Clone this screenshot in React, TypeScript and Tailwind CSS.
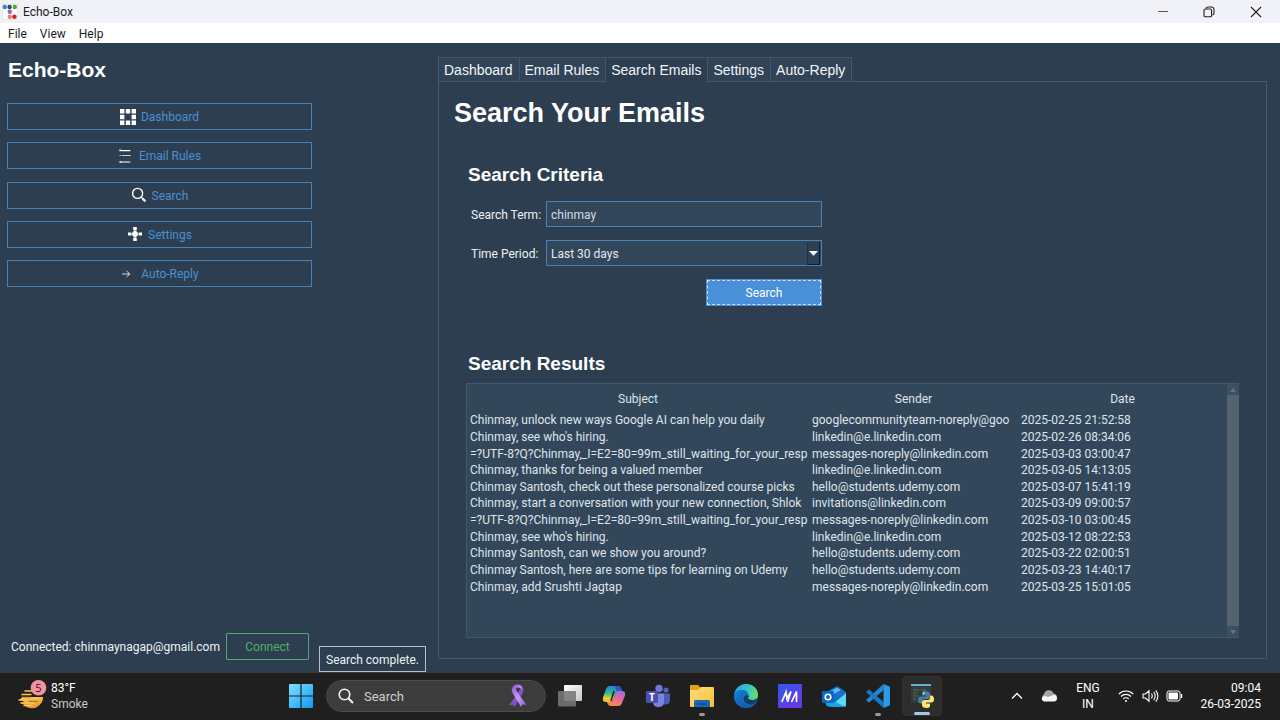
import { useState, type ReactNode } from "react";

const uiFont = "font-['Roboto','Noto_Sans',sans-serif]";
const headFont = "font-['Liberation_Sans',Arial,sans-serif]";

const results = [
  ["Chinmay, unlock new ways Google AI can help you daily", "googlecommunityteam-noreply@goo", "2025-02-25 21:52:58"],
  ["Chinmay, see who's hiring.", "linkedin@e.linkedin.com", "2025-02-26 08:34:06"],
  ["=?UTF-8?Q?Chinmay,_I=E2=80=99m_still_waiting_for_your_resp", "messages-noreply@linkedin.com", "2025-03-03 03:00:47"],
  ["Chinmay, thanks for being a valued member", "linkedin@e.linkedin.com", "2025-03-05 14:13:05"],
  ["Chinmay Santosh, check out these personalized course picks", "hello@students.udemy.com", "2025-03-07 15:41:19"],
  ["Chinmay, start a conversation with your new connection, Shlok", "invitations@linkedin.com", "2025-03-09 09:00:57"],
  ["=?UTF-8?Q?Chinmay,_I=E2=80=99m_still_waiting_for_your_resp", "messages-noreply@linkedin.com", "2025-03-10 03:00:45"],
  ["Chinmay, see who's hiring.", "linkedin@e.linkedin.com", "2025-03-12 08:22:53"],
  ["Chinmay Santosh, can we show you around?", "hello@students.udemy.com", "2025-03-22 02:00:51"],
  ["Chinmay Santosh, here are some tips for learning on Udemy", "hello@students.udemy.com", "2025-03-23 14:40:17"],
  ["Chinmay, add Srushti Jagtap", "messages-noreply@linkedin.com", "2025-03-25 15:01:05"],
];

function LogoIcon() {
  return (
    <svg width="16" height="16" viewBox="0 0 16 16" aria-hidden="true">
      <rect x="0.3" y="0.3" width="15.4" height="15.4" fill="#fff" stroke="#c9dfe2" strokeWidth="0.6" />
      <circle cx="2.8" cy="3" r="2.2" fill="#3f7fd0" />
      <circle cx="7.6" cy="3" r="2.2" fill="#3a3f66" />
      <circle cx="12.8" cy="3" r="2.2" fill="#4fa52f" />
      <circle cx="7.8" cy="7.8" r="2.2" fill="#8c6bb5" />
      <circle cx="7.8" cy="12.8" r="2.2" fill="#f08060" />
      <circle cx="12.4" cy="12.8" r="2.3" fill="#d81f3f" />
    </svg>
  );
}

function GridIcon() {
  return (
    <svg width="16" height="16" viewBox="0 0 16 16" fill="#fff" aria-hidden="true">
      <path d="M0 0h4.4v4.4H0zM5.8 0h4.4v4.4H5.8zM11.6 0H16v4.4h-4.4zM0 5.8h4.4v4.4H0zM11.6 5.8H16v4.4h-4.4zM0 11.6h4.4V16H0zM5.8 11.6h4.4V16H5.8zM11.6 11.6H16V16h-4.4z" />
    </svg>
  );
}

function ListIcon() {
  return (
    <svg width="16" height="16" viewBox="0 0 16 16" fill="#fff" aria-hidden="true">
      <path d="M2.4 2h10v1.2h-10zM1.4 1.6h1.8v1.6H1.4zM3.8 7.2h9v.7h-9zM1.6 7h1.1v1.1H1.6zM3 13.4h9.4v1H3zM1.4 13.2h2.2v1.6H1.4z" />
    </svg>
  );
}

function SearchIcon() {
  return (
    <svg width="16" height="16" viewBox="0 0 16 16" fill="none" stroke="#fff" aria-hidden="true">
      <circle cx="6.6" cy="6.4" r="5" strokeWidth="1.4" />
      <path d="M10.2 10.2 12 12" strokeWidth="1.4" />
      <path d="m11.5 11.5 2.9 2.9" strokeWidth="2.2" />
    </svg>
  );
}

function SettingsIcon() {
  return (
    <svg width="16" height="16" viewBox="0 0 16 16" fill="#fff" aria-hidden="true">
      <circle cx="8" cy="8" r="2.9" />
      <path d="M6.2 1h3.6v3.2H6.2zM6.2 11.8h3.6V15H6.2zM1 6.6h3.2v2.8H1zM11.8 6.6H15v2.8h-3.2zM4 7.5h8v1H4zM7.5 4h1v8h-1z" />
    </svg>
  );
}

function ArrowIcon() {
  return (
    <svg width="16" height="16" viewBox="0 0 16 16" fill="none" stroke="#e8edf2" strokeWidth="0.9" aria-hidden="true">
      <path d="M2 8h8M6.6 5 9.8 8l-3.2 3" />
    </svg>
  );
}

const navItems: { label: string; icon: ReactNode }[] = [
  { label: "Dashboard", icon: <GridIcon /> },
  { label: "Email Rules", icon: <ListIcon /> },
  { label: "Search", icon: <SearchIcon /> },
  { label: "Settings", icon: <SettingsIcon /> },
  { label: "Auto-Reply", icon: <ArrowIcon /> },
];

const tabs = ["Dashboard", "Email Rules", "Search Emails", "Settings", "Auto-Reply"];

function TitleBar() {
  return (
    <header className="flex h-[23px] items-center bg-[#f0f2f7] pl-[2px]">
      <LogoIcon />
      <span className="ml-[5px] text-[12px] leading-4 text-[#1b1b1b]">Echo-Box</span>
      <div className="ml-auto flex h-full">
        <button aria-label="Minimize" className="flex w-[47px] items-center justify-center">
          <svg width="12" height="12" viewBox="0 0 12 12" stroke="#555" fill="none"><path d="M1 5.5h10" /></svg>
        </button>
        <button aria-label="Restore" className="flex w-[46px] items-center justify-center">
          <svg width="12" height="12" viewBox="0 0 12 12" stroke="#222" fill="none">
            <rect x="1" y="3" width="7.6" height="7.8" rx="1.3" strokeWidth="1.1" />
            <path d="M3 2.6Q3.200 1 5 1h3.200Q11 1 11 3.800v3.400q0 1.400-1.600 1.800" strokeWidth="1.1" />
          </svg>
        </button>
        <button aria-label="Close" className="flex w-[48px] items-center justify-center">
          <svg width="12" height="12" viewBox="0 0 12 12" stroke="#222" fill="none" strokeWidth="1.1"><path d="m1 1 10 10M11 1 1 11" /></svg>
        </button>
      </div>
    </header>
  );
}

function Sidebar() {
  return (
    <aside className="flex w-[319px] shrink-0 flex-col pb-3 pl-[7px]">
      <h1 className={`mt-[14px] pl-px text-[21px] leading-[26px] font-bold text-white ${headFont}`}>Echo-Box</h1>
      <nav className="mt-5 mr-[7px] flex h-[184px] flex-col justify-between">
        {navItems.map((item) => (
          <button key={item.label} className="flex h-[27px] items-center justify-center gap-[5px] border border-[#4582b8] text-[12px] leading-4 text-[#4a90d2]">
            {item.icon}
            <span className="pt-px">{item.label}</span>
          </button>
        ))}
      </nav>
      <div className="mt-auto mr-[10px] flex items-center justify-between pl-1">
        <span className="text-[12px] leading-4 whitespace-nowrap text-[#eef2f5]">Connected: chinmaynagap@gmail.com</span>
        <button className="h-[27px] w-[83px] rounded-[1px] border border-[#55a973] text-[12px] leading-4 text-[#4fae68]">Connect</button>
      </div>
    </aside>
  );
}

function SearchForm() {
  const [term, setTerm] = useState("chinmay");
  return (
    <form className="ml-4 flex w-[351px] flex-col gap-[13px] text-[12px] leading-4 text-[#eef2f5]" onSubmit={(e) => e.preventDefault()}>
      <div className="flex items-center">
        <label htmlFor="term" className="w-[75px] pt-px whitespace-nowrap">Search Term:</label>
        <input id="term" value={term} onChange={(e) => setTerm(e.target.value)} className="h-[26px] min-w-0 flex-1 border border-[#4a82b8] bg-[#33475b] px-[4px] pt-px text-[#d5dce2] outline-none" />
      </div>
      <div className="flex items-center">
        <label htmlFor="period" className="w-[75px] pt-px whitespace-nowrap">Time Period:</label>
        <div className="relative flex min-w-0 flex-1">
          <select id="period" defaultValue="30" className="h-[26px] w-full appearance-none border border-[#4a82b8] bg-[#33475b] px-[4px] pt-px text-[#e3e8ec] outline-none">
            <option value="7">Last 7 days</option>
            <option value="30">Last 30 days</option>
            <option value="90">Last 90 days</option>
          </select>
          <span className="pointer-events-none absolute top-[2px] right-[2px] bottom-[1px] flex w-[13px] items-center justify-center border border-t-[#2c3e50] border-r-[#131c2b] border-b-[#131c2b] border-l-[#22303e] bg-[#2e4053]">
            <svg className="shrink-0" width="9" height="5" viewBox="0 0 9 5" fill="#fff" aria-hidden="true"><path d="M0 0h9L4.500 4.800z" /></svg>
          </span>
        </div>
      </div>
      <button className="flex h-[27px] w-[116px] self-end bg-[#4a90d9] p-px text-white">
        <span className="flex h-full w-full items-center justify-center border border-dashed border-[#c9e1f7]">Search</span>
      </button>
    </form>
  );
}

function ResultsTable() {
  return (
    <div className="mr-[27px] mb-5 ml-[27px] flex flex-1 border border-r-0 border-[#44586a] bg-[#33475b]">
      <div className="min-w-0 flex-1">
        <table className="w-full table-fixed border-collapse text-[12px] leading-4 text-[#dfe5ea]">
          <colgroup>
            <col className="w-[45%]" />
            <col />
            <col />
          </colgroup>
          <thead>
            <tr className="h-7">
              <th className="p-0 pt-px font-normal">Subject</th>
              <th className="p-0 pt-px font-normal">Sender</th>
              <th className="p-0 pt-px font-normal">Date</th>
            </tr>
          </thead>
          <tbody className="h-[183px]">
            {results.map((row, i) => (
              <tr key={i}>
                {row.map((cell, j) => (
                  <td key={j} className="overflow-hidden p-0 pl-[3px] whitespace-nowrap">{cell}</td>
                ))}
              </tr>
            ))}
          </tbody>
        </table>
      </div>
      <div className="flex w-3 flex-col items-center justify-between bg-[#54636f]" aria-hidden="true">
        <span className="flex h-[11px] w-full items-center justify-center bg-[#3e5060]">
          <svg width="6" height="4" viewBox="0 0 6 4" fill="#657482"><path d="M0 4h6L3 0z" /></svg>
        </span>
        <span className="flex h-[11px] w-full items-center justify-center bg-[#3e5060]">
          <svg width="6" height="4" viewBox="0 0 6 4" fill="#657482"><path d="M0 0h6L3 4z" /></svg>
        </span>
      </div>
    </div>
  );
}

function Workspace() {
  const [active, setActive] = useState("Search Emails");
  return (
    <main className="mt-[14px] mr-[13px] mb-[13px] flex min-w-0 flex-1 flex-col">
      <div role="tablist" className="flex border-l border-[#465b6d]">
        {tabs.map((tab) => (
          <button
            key={tab}
            role="tab"
            aria-selected={active === tab}
            onClick={() => setActive(tab)}
            className={`h-[25px] border-t border-r border-[#43576a] pr-[6px] pl-[5px] text-[14px] leading-4 text-[#f4f7f9] ${headFont} ${active === tab ? "bg-[#2c3e50]" : "border-b bg-[#304357]"}`}
          >
            {tab}
          </button>
        ))}
        <span className="flex-1 border-b border-[#465b6d]" />
      </div>
      <section className="flex flex-1 flex-col rounded-b-[2px] border border-t-0 border-[#465b6d]">
        <h2 className={`mt-[14px] ml-[15px] text-[27px] leading-[34px] font-bold text-white ${headFont}`}>Search Your Emails</h2>
        <h3 className={`mt-[33px] ml-[29px] text-[19px] leading-6 font-bold text-white ${headFont}`}>Search Criteria</h3>
        <div className="mt-[14px] ml-4">
          <SearchForm />
        </div>
        <h3 className={`mt-[46px] mb-[7px] ml-[29px] text-[19px] leading-6 font-bold text-white ${headFont}`}>Search Results</h3>
        <ResultsTable />
      </section>
    </main>
  );
}

function WeatherIcon() {
  return (
    <svg width="30" height="32" viewBox="0 0 30 32" aria-hidden="true">
      <defs><linearGradient id="sun" x1="0" y1="0" x2="0" y2="1"><stop offset="0" stopColor="#f6c34a" /><stop offset="1" stopColor="#ee8f2c" /></linearGradient></defs>
      <path d="M4 17h21a10.500 10.500 0 0 1-4 8.500A10 10 0 0 1 6.500 25L2 22.500h5L2 19.500z" fill="url(#sun)" />
      <path d="M7 11h7M4 14.500h9M9 18h11M1 20h8M3 23h13M6 25.500h8" stroke="#f5c65a" strokeWidth="1.500" strokeLinecap="round" />
      <path d="M4 17h9M11 21.500h9" stroke="#9b5c22" strokeWidth="0.800" />
      <circle cx="20.500" cy="7.800" r="7.800" fill="#f591a0" />
      <text x="20.500" y="11.800" textAnchor="middle" fontSize="11" fill="#30161a" fontFamily="Open Sans, sans-serif">5</text>
    </svg>
  );
}

function StartIcon() {
  return (
    <svg width="24" height="24" viewBox="0 0 24 24" aria-hidden="true">
      <defs><linearGradient id="start" x1="0" y1="0" x2="1" y2="1"><stop offset="0" stopColor="#7be3ff" /><stop offset="1" stopColor="#1295f3" /></linearGradient></defs>
      <path d="M1 0h10.400v11.400H0V1q0-1 1-1zM12.600 0H23q1 0 1 1v10.400H12.600zM0 12.600h11.400V24H1q-1 0-1-1zM12.600 12.600H24V23q0 1-1 1H12.600z" fill="url(#start)" />
    </svg>
  );
}

function RibbonIcon() {
  return (
    <svg width="20" height="24" viewBox="0 0 20 24" aria-hidden="true">
      <defs><linearGradient id="rib" x1="0" y1="0" x2="1" y2="1"><stop offset="0" stopColor="#8c53dc" /><stop offset="0.500" stopColor="#c59cf5" /><stop offset="1" stopColor="#8a58cf" /></linearGradient></defs>
      <path d="M13 1.500Q17 5.500 14.200 10L6.500 23l-2-2.500L1 21.500 10.200 8Q13.500 4.500 13 1.500z" fill="#8550cf" />
      <path d="M5 2.500Q2.500 6 4.800 9.500L13 23l1.800-2.800 3.700.8L8.800 7.500Q7 4 9.500 3.500q3 0 4.500 2Q15 .5 9.500.5 6.500.5 5 2.500z" fill="url(#rib)" />
    </svg>
  );
}

function TaskViewIcon() {
  return (
    <svg width="26" height="24" viewBox="0 0 26 24" aria-hidden="true">
      <defs><linearGradient id="tv" x1="0" y1="0" x2="1" y2="1"><stop offset="0" stopColor="#fff" /><stop offset="1" stopColor="#c8c8c8" /></linearGradient></defs>
      <rect x="7" y="1" width="18" height="16" rx="1" fill="url(#tv)" />
      <rect x="1" y="7" width="18" height="15.500" rx="1" fill="#777" fillOpacity="0.880" />
    </svg>
  );
}

function CopilotIcon() {
  return (
    <svg width="24" height="24" viewBox="0 0 24 24" aria-hidden="true">
      <defs>
        <linearGradient id="cpa" x1="0.300" y1="0" x2="0.200" y2="1"><stop offset="0" stopColor="#168bd8" /><stop offset="0.450" stopColor="#38b890" /><stop offset="0.750" stopColor="#d5d637" /><stop offset="1" stopColor="#f5b830" /></linearGradient>
        <linearGradient id="cpb" x1="0.700" y1="0" x2="0.400" y2="1"><stop offset="0" stopColor="#a16be0" /><stop offset="0.500" stopColor="#e9679e" /><stop offset="1" stopColor="#f58a4a" /></linearGradient>
      </defs>
      <path d="M8 2h8q2.500 0 3.400 3l.6 2h-4q-2 0-2.800 3l-1.700 5.500Q10.500 18 8 18H4Q0 18 1 13.500L4 5Q5 2 8 2z" fill="url(#cpa)" />
      <path d="M13 2h3q2.500 0 3.400 3l.6 2h-4q-2 0-2.500-2z" fill="#2857c8" />
      <path d="M16 7h4q4 0 3 4.500L20 19q-1 3-4 3H9q-3 0-4-4h3q2.500 0 3.500-2.500L13.500 9Q14 7 16 7z" fill="url(#cpb)" />
      <path d="m12 7-3 10" stroke="#242027" strokeWidth="1.600" />
    </svg>
  );
}

function TeamsIcon() {
  return (
    <svg width="26" height="24" viewBox="0 0 26 24" aria-hidden="true">
      <circle cx="14" cy="4.500" r="3.700" fill="#6d78d8" />
      <circle cx="21" cy="6" r="2.600" fill="#565fba" />
      <path d="M16 9.500h8q1 0 1 1V16q0 4-4 4.500h-5z" fill="#5059b3" />
      <path d="M8 9.500h11v8q0 5.500-5.500 5.500T8 17.500z" fill="#7b83e0" />
      <rect x="1" y="7" width="12" height="12" rx="1.300" fill="#4851ae" />
      <text x="7" y="16.500" textAnchor="middle" fontSize="10" fontWeight="700" fill="#fff" fontFamily="Open Sans, sans-serif">T</text>
    </svg>
  );
}

function FolderIcon() {
  return (
    <svg width="26" height="24" viewBox="0 0 26 24" aria-hidden="true">
      <defs><linearGradient id="fold" x1="0" y1="0" x2="1" y2="1"><stop offset="0" stopColor="#ffe080" /><stop offset="1" stopColor="#f8be30" /></linearGradient></defs>
      <path d="M2 1h7l3 3h12v6H1V2q0-1 1-1z" fill="#e6a020" />
      <path d="M2 6h7l3-3h12q1 0 1 1v18q0 1-1 1H2q-1 0-1-1V7q0-1 1-1z" fill="url(#fold)" />
      <path d="M5 23v-5.500Q5 16 6.500 16h13q1.500 0 1.500 1.500V23z" fill="#1769b5" />
      <path d="M8.500 20h9" stroke="#0b4682" strokeWidth="1.300" />
    </svg>
  );
}

function EdgeIcon() {
  return (
    <svg width="24" height="24" viewBox="0 0 24 24" aria-hidden="true">
      <defs>
        <linearGradient id="eda" x1="0" y1="0.300" x2="1" y2="0.500"><stop offset="0" stopColor="#25a6e3" /><stop offset="0.600" stopColor="#38c8b9" /><stop offset="1" stopColor="#70da5d" /></linearGradient>
        <linearGradient id="edb" x1="0" y1="0" x2="1" y2="1"><stop offset="0" stopColor="#1681d7" /><stop offset="1" stopColor="#0d519f" /></linearGradient>
      </defs>
      <circle cx="12" cy="12" r="12" fill="#1674c8" />
      <path d="M.4 10C1.500 4 6.500 0 12 0c7 0 12 5 12 10.500 0 3.500-2.500 5.500-6 5.500-2.500 0-4-1-4-1.900 0-.6.800-1 .8-2.500C14.800 8.500 11.500 6 8 6 4.500 6 1.500 8 .4 10z" fill="url(#eda)" />
      <path d="M0 12C1 7 4.500 6 8 6c2.500 0 4.700 1.200 6 3-3-.8-6 1.500-6 5 0 4 4 8.500 10 7.800C12 26 0 23 0 12z" fill="url(#edb)" />
      <path d="M14.800 12c0 1-.8 1.500-.8 2.100 0 .9 1.500 1.900 4 1.900 1.800 0 3.500-.6 4.500-1.600l.4 1.600c-1.500 3.500-4 4.700-6 4.700-4.500 0-7.400-3.200-7.400-6 0-2 1.500-3.500 3-3.700z" fill="#123f69" />
    </svg>
  );
}

function ArmouryIcon() {
  return (
    <svg width="24" height="24" viewBox="0 0 24 24" aria-hidden="true">
      <defs><linearGradient id="my" x1="0" y1="0" x2="0.800" y2="1"><stop offset="0" stopColor="#3158ec" /><stop offset="1" stopColor="#6938e4" /></linearGradient></defs>
      <rect width="24" height="24" fill="url(#my)" />
      <path d="M3.800 18 8 8l.8 6.500L13 7.500 9.500 18M13.500 18l5-10.500V18" stroke="#fff" strokeWidth="1.700" fill="none" />
    </svg>
  );
}

function OutlookIcon() {
  return (
    <svg width="26" height="24" viewBox="0 0 26 24" aria-hidden="true">
      <path d="M5 8 15 2.500Q16 2 17 2.500L25 8v13q0 1.500-1.500 1.500H8q-3 0-3-3z" fill="#1566bd" />
      <path d="m8 8 8-4.500 4 2.500-10 6z" fill="#59b8f0" />
      <path d="m13 11 7-5L25 9l-11 7z" fill="#1a72c8" />
      <path d="M25 9v12q0 1.500-1.500 1.500H9z" fill="#55dafa" />
      <path d="M5 13.500 23.500 22.500H8q-3 0-3-3z" fill="#1ba2e6" />
      <rect x="1" y="7" width="12" height="12" rx="1.300" fill="#0d68c1" />
      <circle cx="7" cy="13" r="2.800" stroke="#fff" strokeWidth="1.600" fill="none" />
    </svg>
  );
}

function CodeIcon() {
  return (
    <svg width="24" height="24" viewBox="0 0 24 24" aria-hidden="true">
      <path d="M17.500 0v6.200L3 18.500 0 16z" fill="#2488cf" />
      <path d="M17.500 24v-6.200L3 5.500 0 8z" fill="#1678c4" />
      <path d="M17.500 0 24 2.700v18.600L17.500 24z" fill="#2b9ae8" />
    </svg>
  );
}

function PythonWindowIcon() {
  return (
    <svg width="26" height="26" viewBox="0 0 26 26" aria-hidden="true">
      <path d="M2 1h20v19H2z" fill="#333b3c" />
      <path d="M2 1h20v2H2z" fill="#6aaad7" />
      <path d="M4 7h6M4 10h4M4 13h5M4 16h3M12 7h5" stroke="#4f7848" />
      <path d="M16.500 8c-3.500 0-3.500 1.500-3.500 3v1.500h4v1h-5.500C9.500 13.500 9 15 9 17s1 3.500 2.500 3.500H13V18q0-2 2-2h4q2 0 2-2v-3c0-2-1.500-3-4.500-3z" fill="#477ba3" />
      <path d="M17.500 25c3.500 0 3.500-1.500 3.500-3v-1.500h-4v-1h5.500c2 0 2.500-1.500 2.500-3.500s-1-3.500-2.500-3.500H21V15q0 2-2 2h-4q-2 0-2 2v3c0 2 1.500 3 4.500 3z" fill="#ffe26a" />
      <circle cx="14.800" cy="10.300" r="0.900" fill="#fff" />
      <circle cx="19.200" cy="22.700" r="0.800" fill="#fff" />
    </svg>
  );
}

const apps: { name: string; icon: ReactNode; state?: "open" | "active" }[] = [
  { name: "Task View", icon: <TaskViewIcon /> },
  { name: "Copilot", icon: <CopilotIcon /> },
  { name: "Teams", icon: <TeamsIcon /> },
  { name: "File Explorer", icon: <FolderIcon />, state: "open" },
  { name: "Edge", icon: <EdgeIcon /> },
  { name: "MyASUS", icon: <ArmouryIcon /> },
  { name: "Outlook", icon: <OutlookIcon /> },
  { name: "Visual Studio Code", icon: <CodeIcon />, state: "open" },
  { name: "Python", icon: <PythonWindowIcon />, state: "active" },
];

function Taskbar() {
  return (
    <footer className="flex h-12 items-center border-t border-[#3b3a3b] bg-[#201f20] pb-px text-[12px] leading-4 text-white">
      <button className="flex w-[281px] items-center gap-[3px] pl-[18px] text-left">
        <WeatherIcon />
        <span className="flex flex-col">
          <span>83°F</span>
          <span className="text-[#c9c9c9]">Smoke</span>
        </span>
      </button>
      <button aria-label="Start" className="flex w-10 items-center justify-center"><StartIcon /></button>
      <label className="mr-1 ml-[5px] flex h-8 w-[220px] items-center gap-[10px] rounded-full border border-[#4c4c4c] bg-[#3c3c3c] px-[11px]">
        <svg width="16" height="16" viewBox="0 0 16 16" fill="none" stroke="#f2f2f2" strokeWidth="1.600" aria-hidden="true"><circle cx="6.500" cy="6.500" r="5.300" /><path d="m10.500 10.500 4.500 4.500" strokeWidth="2" /></svg>
        <input aria-label="Search" placeholder="Search" className="min-w-0 flex-1 bg-transparent pt-px text-[13px] leading-4 outline-none placeholder:text-[#cfcfcf]" />
        <span className="mr-[6px]"><RibbonIcon /></span>
      </label>
      <div className="flex gap-1">
        {apps.map((app) => (
          <button key={app.name} aria-label={app.name} className={`relative flex h-10 w-10 items-center justify-center rounded-[4px] ${app.state === "active" ? "border border-[#343334] bg-[#2e2d2e]" : ""}`}>
            {app.icon}
            {app.state === "open" && <span className="absolute bottom-0 h-[3px] w-[6px] rounded-full bg-[#9a9a9a]" />}
            {app.state === "active" && <span className="absolute bottom-0 h-[3px] w-4 rounded-full bg-[#a5cbe0]" />}
          </button>
        ))}
      </div>
      <div className="ml-auto flex items-center pr-[19px]">
        <svg className="mr-[18px]" width="12" height="8" viewBox="0 0 12 8" fill="none" stroke="#fff" strokeWidth="1.300" aria-hidden="true"><path d="m1 6.500 5-5 5 5" /></svg>
        <svg className="mr-[18px]" width="17" height="12" viewBox="0 0 17 12" aria-hidden="true">
          <path d="M4 11a4 4 0 0 1-1-7 5 5 0 0 1 9.500-.5A4 4 0 0 1 14 11z" fill="#a5a5a5" />
          <path d="M3 11.500a2.800 2.800 0 0 1 0-5.500q2 0 4 1l6-2.300a3.500 3.500 0 0 1 .5 6.800z" fill="#f4f4f4" />
        </svg>
        <span className="mr-[18px] w-6 text-center">ENG<br />IN</span>
        <svg className="mr-2" width="16" height="14" viewBox="0 0 16 14" fill="none" stroke="#fff" strokeWidth="1.200" aria-hidden="true">
          <path d="M.8 5a10.200 10.200 0 0 1 14.400 0M3 7.500a7 7 0 0 1 10 0M5.200 9.900a4 4 0 0 1 5.600 0" /><circle cx="8" cy="12" r="1" fill="#fff" stroke="none" />
        </svg>
        <svg className="mr-[7px]" width="17" height="14" viewBox="0 0 17 14" fill="none" stroke="#fff" strokeWidth="1.100" aria-hidden="true">
          <path d="M1 5h2.500L7 1.800v10.400L3.500 9H1zM9.500 4.500q1.500 2.500 0 5M11.700 2.800q3 4.200 0 8.400M13.800 1.300q4.200 5.700 0 11.400" />
        </svg>
        <svg width="17" height="12" viewBox="0 0 17 12" aria-hidden="true">
          <rect x="1" y="1" width="13" height="10" rx="2" fill="none" stroke="#fff" /><rect x="2.500" y="2.500" width="9.500" height="7" rx="0.800" fill="#fff" /><path d="M15 4h1.200v4H15z" fill="#fff" />
        </svg>
        <span className="w-[78px] text-right whitespace-nowrap">09:04<br />26-03-2025</span>
      </div>
    </footer>
  );
}

export default function App() {
  return (
    <div className={`flex min-h-screen flex-col bg-[#2c3e50] ${uiFont}`}>
      <TitleBar />
      <nav className="flex h-5 items-center gap-[13px] bg-white pt-px pl-2 text-[12px] leading-4 text-[#1b1b1b]">
        <button>File</button>
        <button>View</button>
        <button>Help</button>
      </nav>
      <div className="flex flex-1">
        <Sidebar />
        <div className="flex w-[119px] shrink-0 items-end">
          <output className="flex h-[26px] items-center border border-[#b9bfc5] px-[6px] pt-px text-[12px] leading-4 whitespace-nowrap text-[#eef2f5]">Search complete.</output>
        </div>
        <Workspace />
      </div>
      <Taskbar />
    </div>
  );
}
